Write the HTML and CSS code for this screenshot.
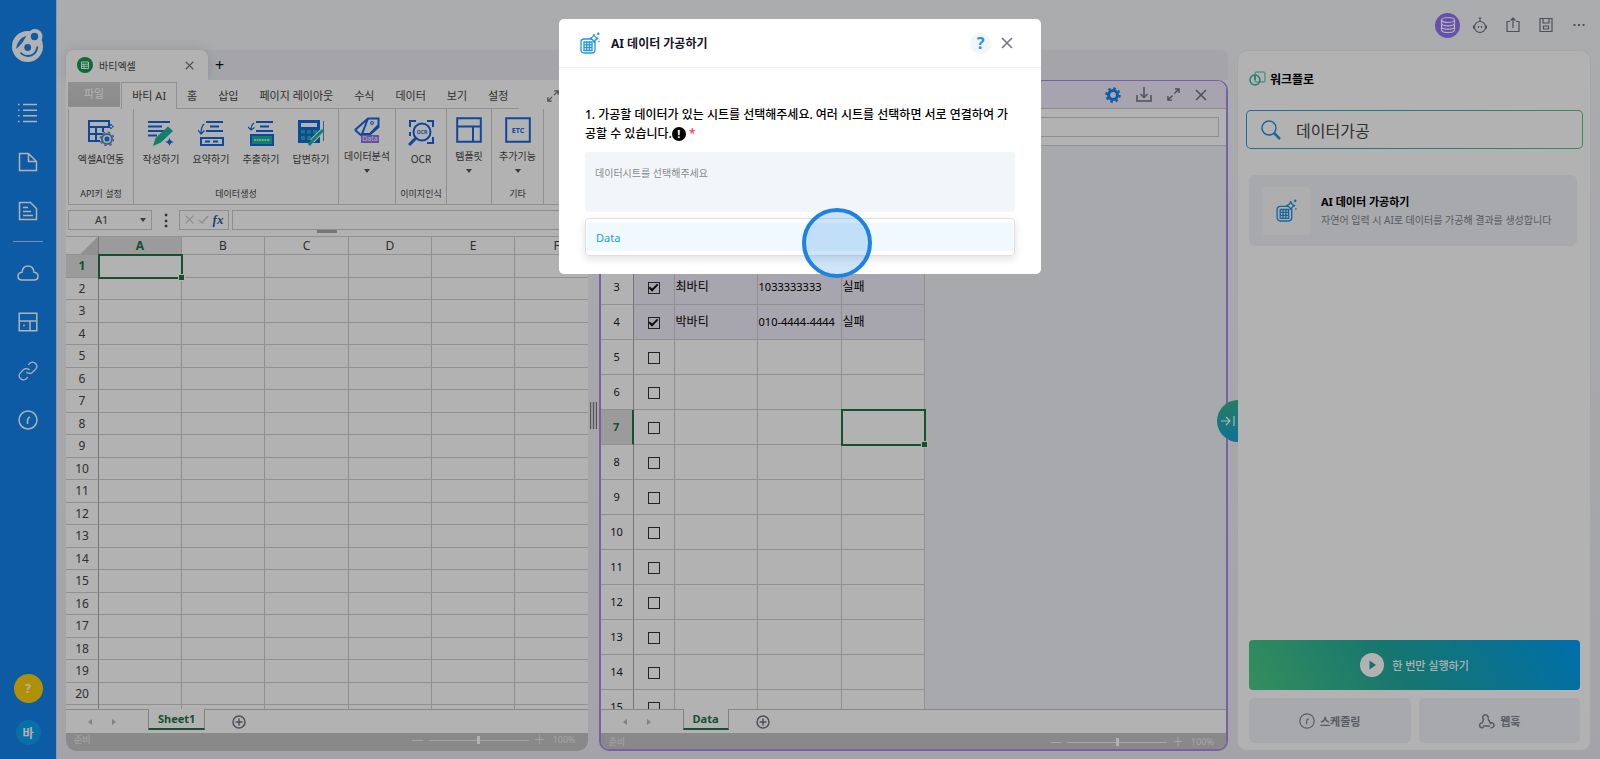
FILE: index.html
```html
<!DOCTYPE html>
<html lang="ko">
<head>
    <meta charset="UTF-8">
    <meta name="viewport" content="width=device-width, initial-scale=1.0">
    <title>바티엑셀</title>
    <link rel="stylesheet" href="styles.css">
</head>
<body>
    <!-- shared icons -->
    <svg class="defs" width="0" height="0">
        <symbol id="i-close" viewBox="0 0 12 12"><path d="M1 1l10 10M11 1L1 11"/></symbol>
        <symbol id="i-expand" viewBox="0 0 14 14"><path d="M8.500 1H13v4.500M13 1L8 6M5.500 13H1V8.500M1 13l5-5"/></symbol>
        <symbol id="i-clock" viewBox="0 0 20 20"><circle cx="10" cy="10" r="9"/><path d="M9.500 14v-3.500q0-2.500 2.500-3.500"/></symbol>
        <symbol id="i-plus" viewBox="0 0 14 14"><circle cx="7" cy="7" r="6"/><path d="M7 3.500v7M3.500 7h7"/></symbol>
        <symbol id="i-data" viewBox="0 0 20 22">
            <rect x="1" y="7" width="14" height="14" rx="3"/>
            <path d="M4 10h8v8.500H4zM6.700 10v8.500M9.400 10v8.500M4 12.800h8M4 15.700h8" stroke-width="1.300"/>
            <path d="M14 2q.7 3.700 4.200 4.300-3.500.7-4.200 4.200-.7-3.500-4.200-4.200Q13.300 5.700 14 2z" fill="#fff"/>
            <path d="M18.300.5v2.600M19.600 1.800H17M19 8.800v1.400"/>
        </symbol>
    </svg>

    <aside class="sidebar">
        <a href="#" class="logo" aria-label="logo">
            <svg width="32" height="34" viewBox="0 0 32 34">
                <circle cx="15.500" cy="18.500" r="15.500" fill="#fff"/>
                <circle cx="23" cy="8.500" r="7.500" fill="#fff"/>
                <circle cx="22.500" cy="8.500" r="3.700" fill="#1382ed"/>
                <circle cx="15.700" cy="19.500" r="3.400" fill="#1382ed"/>
                <path d="M8.500 24.500q3 3.500 7.500 3.500 8 0 9.500-9.500M5.500 18.500Q7 12 12.500 9.500 10 15 5.500 18.500z" fill="none" stroke="#1382ed" stroke-width="1.800"/>
            </svg>
        </a>
        <a href="#" aria-label="list"><svg width="20" height="20" viewBox="0 0 20 20"><path d="M5 1.500h14M5 7.200h14M5 12.800h14M5 18.500h14M0 1.500h1.500M0 7.200h1.500M0 12.800h1.500M0 18.500h1.500"/></svg></a>
        <a href="#" aria-label="file"><svg width="20" height="20" viewBox="0 0 20 20"><path d="M1.500 1.500h9l8 8v9h-17zM10.500 1.500v8h8"/></svg></a>
        <a href="#" aria-label="document"><svg width="20" height="20" viewBox="0 0 20 20"><path d="M1.500 1.500h11l6 6v11h-17zM5 6.500h5M5 10.500h8M5 14.500h10"/></svg></a>
        <hr>
        <a href="#" aria-label="cloud"><svg width="22" height="20" viewBox="0 0 22 20"><path d="M5 17q-4 0-4-3.800Q1 9.800 5 9.300 5.500 3 11 3t6 6.300q4 .5 4 3.900Q21 17 17 17z"/></svg></a>
        <a href="#" aria-label="layout"><svg width="20" height="20" viewBox="0 0 20 20"><path d="M1.200 1.200h17.600v17.600H1.200zM1.200 9h17.600M12 9v9.800M6 12.500v1.800"/></svg></a>
        <a href="#" aria-label="link"><svg width="20" height="20" viewBox="0 0 24 24"><path d="M10 13a5 5 0 0 0 7.500.5l4-4a5 5 0 0 0-7-7l-2.300 2.200M14 11a5 5 0 0 0-7.500-.5l-4 4a5 5 0 0 0 7 7l2.300-2.200"/></svg></a>
        <a href="#" aria-label="schedule"><svg width="20" height="20"><use href="#i-clock"/></svg></a>
        <button class="help">?</button>
        <button class="avatar">바</button>
    </aside>

    <div class="page">
        <header class="topbar">
            <button class="db" aria-label="database"><svg width="16" height="18" viewBox="0 0 16 18"><ellipse cx="8" cy="4" rx="6.500" ry="2.500"/><path d="M1.500 4v10q0 2.500 6.500 2.500t6.500-2.500V4M1.500 7.300q0 2.500 6.500 2.500t6.500-2.500M1.500 10.700q0 2.500 6.500 2.500t6.500-2.500"/></svg></button>
            <button aria-label="bot"><svg width="16" height="18" viewBox="0 0 16 18"><circle cx="8" cy="11" r="5.500"/><path d="M8 5.500V2M6.800 2h2.400M1.500 9.500v3M14.500 9.500v3M6.500 10v2M9.500 10v2"/></svg></button>
            <button aria-label="share"><svg width="16" height="18" viewBox="0 0 16 18"><path d="M5 5.500H2v10h12v-10h-3M8 12V2M5.500 4.500L8 2l2.500 2.500"/></svg></button>
            <button aria-label="save"><svg width="16" height="18" viewBox="0 0 16 18"><path d="M2 2.500h12v13H2zM5 2.500V7h6V2.500M5.500 10h5v3h-5z"/></svg></button>
            <button aria-label="more"><svg width="16" height="18" viewBox="0 0 16 18"><path d="M2.500 9h2M7 9h2M11.500 9h2" stroke-width="2"/></svg></button>
        </header>

        <div class="workspace">
            <section class="books">
                <div class="doc-tabs">
                    <div class="doc-tab">
                        <svg width="16" height="16" viewBox="0 0 16 16"><circle cx="8" cy="8" r="8" fill="#129a52"/><path d="M4.500 5h7v6.500h-7zM4.500 7.200h7M4.500 9.300h7M7 7v4.500" fill="none" stroke="#fff"/></svg>
                        <span>바티엑셀</span>
                        <button aria-label="close tab"><svg class="line" width="9" height="9"><use href="#i-close"/></svg></button>
                    </div>
                    <button class="new-tab">+</button>
                </div>

                <div class="panes">
                    <div class="pane left">
                        <nav class="menu">
                            <a href="#" class="file">파일</a>
                            <a href="#" class="active">바티 AI</a>
                            <a href="#">홈</a>
                            <a href="#">삽입</a>
                            <a href="#">페이지 레이아웃</a>
                            <a href="#">수식</a>
                            <a href="#">데이터</a>
                            <a href="#">보기</a>
                            <a href="#">설정</a>
                            <svg class="line" width="12" height="12"><use href="#i-expand"/></svg>
                        </nav>

                        <div class="ribbon">
                            <div class="group g-api">
                                <div class="tools">
                                    <button><svg viewBox="0 0 26 26"><path d="M1 1h20v6H1zM1 7v14h11M1 14h14M8 7v14M15 7v5"/><path d="M23 4q.3 2 2.500 2.500-2.200.5-2.500 2.500-.3-2-2.500-2.500Q22.700 6 23 4z" stroke-width="1"/><circle cx="19" cy="19" r="5" fill="#fff" stroke="#3aa0b8"/><circle cx="19" cy="19" r="6.500" stroke="#9a7ae0" stroke-dasharray="2.500 2.600"/><circle cx="19" cy="19" r="1.500"/></svg>엑셀AI연동</button>
                                </div>
                                <p>API키 설정</p>
                            </div>
                            <div class="group g-gen">
                                <div class="tools">
                                    <button><svg viewBox="0 0 26 26"><path d="M0 2h22M0 6.500h14M0 11h18M0 15.500h9"/><path d="M5 26l2.500-8L20 6.500l5 4.500-12 11.500z" fill="#1bb59a" stroke="none"/><path d="M21.500 17.500q.7 4 4.500 4.500-3.800.5-4.500 4-.7-3.500-4.500-4 3.800-.5 4.500-4.500z" fill="#1368e0" stroke="none"/></svg>작성하기</button>
                                    <button><svg viewBox="0 0 26 26"><path d="M8 2h17M12 6.500h9M8 11h17M3 18h22v7H3zM7 21.500h5M15 21.500h5"/><path d="M6 4q-3 3-3 10M0 10l3 4 3.500-3.500" stroke-width="1.200"/></svg>요약하기</button>
                                    <button><svg viewBox="0 0 26 26"><path d="M8 2h17M12 6.500h9M8 11h17"/><path d="M3 15h22v10H3z" fill="#1bb59a"/><path d="M6 20h16" stroke="#a9e8dc" stroke-dasharray="2 .6"/><path d="M6 3q-3 2-3 7M0 7l3 3 3.500-2.500" stroke-width="1.200"/></svg>추출하기</button>
                                    <button><svg viewBox="0 0 26 26"><path d="M1 1h20v21H1z" fill="#1368e0"/><path d="M3 3h16v4H3z" fill="#fff" stroke="none"/><path d="M3 10h4v3.500H3zM9 10h4v3.500H9zM15 10h4v3.500h-4zM3 16h4v4H3zM9 16h4v4H9z" fill="#1bb59a" stroke="none"/><path d="M24 11L14 21" stroke="#fff" stroke-width="5"/><path d="M25 10L14 21l-3 4" stroke="#1bb59a" stroke-width="3"/><path d="M25.500 1v20" stroke="#3aa0b8" stroke-width="1"/></svg>답변하기</button>
                                </div>
                                <p>데이터생성</p>
                            </div>
                            <div class="group g-analysis">
                                <div class="tools raised">
                                    <button><svg viewBox="0 0 26 26"><path d="M1 13L14 1.500h10.500V10L13 20M1 13l7 6M14 1.500L8 17h8l8.500-9"/><circle cx="18" cy="6" r="1.500" stroke-width="1"/><path d="M7 18h18v8H7z" fill="#9273f0" stroke="none"/><text x="16" y="24" font-size="7">Data</text></svg>데이터분석<i></i></button>
                                </div>
                            </div>
                            <div class="group g-ocr">
                                <div class="tools">
                                    <button><svg viewBox="0 0 26 26"><path d="M2 7V1h6M19 1h6v6M25 17v6h-6M2 12v4"/><circle cx="14" cy="12" r="8.500"/><path d="M8 18l-7 7" stroke-width="3"/><text class="blue" x="14" y="14" font-size="5">OCR</text></svg>OCR</button>
                                </div>
                                <p>이미지인식</p>
                            </div>
                            <div class="group g-template">
                                <div class="tools raised">
                                    <button><svg viewBox="0 0 26 26"><path d="M1.200 1.200h23.600v23.600H1.200zM1.200 9.500h23.600M17 9.500v15.300"/></svg>템플릿<i></i></button>
                                </div>
                            </div>
                            <div class="group g-etc">
                                <div class="tools raised">
                                    <button><svg viewBox="0 0 26 26"><path d="M1.200 1.200h23.600v23.600H1.200z"/><text class="blue" x="13" y="16" font-size="7">ETC</text></svg>추가기능<i></i></button>
                                </div>
                                <p>기타</p>
                            </div>
                        </div>

                        <div class="formula">
                            <button class="namebox">A1<i></i></button>
                            <span class="dots">⋮</span>
                            <div class="fx"><svg class="line" width="9" height="9"><use href="#i-close"/></svg><svg class="line" width="11" height="9" viewBox="0 0 11 9"><path d="M1 5l3 3 6-7"/></svg><em>fx</em></div>
                            <input type="text" aria-label="formula">
                            <div class="grip"></div>
                        </div>

                        <div class="grid">
                            <table class="sheet" id="sheet1"></table>
                        </div>
                        <div class="sheet-tabs">
                            <span class="arrows"><i></i><i></i></span>
                            <button class="sheet-tab">Sheet1</button>
                            <button class="add" aria-label="add sheet"><svg class="line" width="14" height="14"><use href="#i-plus"/></svg></button>
                        </div>
                        <div class="status">
                            <span>준비</span>
                            <div class="zoom"><b>—</b><input type="range" aria-label="zoom"><b>＋</b><span>100%</span></div>
                        </div>
                    </div>

                    <div class="splitter"></div>

                    <div class="pane right">
                        <div class="pane-head">
                            <svg width="16" height="16" viewBox="0 0 16 16"><circle cx="8" cy="8" r="4.500" fill="none" stroke="#1382ed" stroke-width="3"/><circle cx="8" cy="8" r="6.800" fill="none" stroke="#1382ed" stroke-width="2" stroke-dasharray="2.670"/></svg>
                            <svg class="line" width="16" height="16" viewBox="0 0 16 16"><path d="M1 8v6h14V8M8 0v10M4.500 7L8 10.500 11.500 7"/></svg>
                            <svg class="line" width="13" height="13"><use href="#i-expand"/></svg>
                            <svg class="line" width="12" height="12"><use href="#i-close"/></svg>
                        </div>
                        <div class="formula"><input type="text" aria-label="formula"></div>
                        <div class="grid">
                            <table class="sheet data" id="data"></table>
                        </div>
                        <div class="sheet-tabs">
                            <span class="arrows"><i></i><i></i></span>
                            <button class="sheet-tab">Data</button>
                            <button class="add" aria-label="add sheet"><svg class="line" width="14" height="14"><use href="#i-plus"/></svg></button>
                        </div>
                        <div class="status">
                            <span>준비</span>
                            <div class="zoom"><b>—</b><input type="range" aria-label="zoom"><b>＋</b><span>100%</span></div>
                        </div>
                    </div>
                </div>
            </section>

            <section class="workflow">
                <button class="collapse" aria-label="collapse"><svg width="14" height="12" viewBox="0 0 14 12"><path d="M0 6h9M5 2l4 4-4 4M13 1v10"/></svg></button>
                <h2><svg width="17" height="16" viewBox="0 0 17 16"><rect x="6" y="1" width="10" height="10" rx="2" stroke="#7adbb5"/><circle cx="6" cy="9" r="5" stroke="#35b5a5"/><path d="M6 4v5" stroke="#35b5a5"/></svg>워크플로</h2>
                <label class="search">
                    <svg width="20" height="20" viewBox="0 0 20 20"><circle cx="8" cy="8" r="7"/><path d="M13 13l6 6" stroke-width="2.500"/></svg>
                    <input type="text" value="데이터가공" aria-label="search">
                </label>
                <a href="#" class="card">
                    <span class="card-icon"><svg width="21" height="23"><use href="#i-data"/></svg></span>
                    <span class="card-text"><strong>AI 데이터 가공하기</strong><small>자연어 입력 시 AI로 데이터를 가공해 결과를 생성합니다</small></span>
                </a>
                <button class="run"><svg width="24" height="24" viewBox="0 0 24 24"><circle cx="12" cy="12" r="12" fill="#fff"/><path d="M9.500 7.500l6.500 4.500-6.500 4.500z" fill="#22a596"/></svg>한 번만 실행하기</button>
                <div class="actions">
                    <button><svg width="16" height="16"><use href="#i-clock"/></svg>스케줄링</button>
                    <button><svg width="17" height="16" viewBox="0 0 17 16"><path d="M6 5.500L4 10.500M10 6l3 5M5 13h7M5.500 6.500a2.700 2.700 0 1 1 4.500-1M3.500 10a2.400 2.400 0 1 0 2 4.200M12 10.500a2.400 2.400 0 1 1 .5 4"/></svg>웹훅</button>
                </div>
            </section>
        </div>
    </div>

    <div class="overlay">
        <div class="modal">
            <div class="modal-head">
                <svg class="blue-line" width="20" height="22"><use href="#i-data"/></svg>
                <h3>AI 데이터 가공하기</h3>
                <button class="q">?</button>
                <button aria-label="close"><svg class="line" width="12" height="12"><use href="#i-close"/></svg></button>
            </div>
            <div class="modal-body">
                <label for="sheets">1. 가공할 데이터가 있는 시트를 선택해주세요. 여러 시트를 선택하면 서로 연결하여 가공할 수 있습니다.<span class="info">!</span> <span class="required">*</span></label>
                <textarea id="sheets" placeholder="데이터시트를 선택해주세요"></textarea>
                <div class="options"><button>Data</button></div>
            </div>
            <div class="pointer"></div>
        </div>
    </div>

    <script>
        let cols = ["A", "B", "C", "D", "E", "F"];
        let html = "<colgroup><col>" + "<col>".repeat(6) + "</colgroup><tr><th class='corner'></th>";
        cols.forEach(c => html += `<th class="${c === "A" ? "on" : ""}">${c}</th>`);
        html += "</tr>";
        for (let r = 1; r <= 20; r++) {
            html += `<tr><th class="${r === 1 ? "on" : ""}">${r}</th>`;
            cols.forEach(c => html += r === 1 && c === "A" ? "<td class='selected'></td>" : "<td></td>");
            html += "</tr>";
        }
        html += "<tr>" + "<th></th>" + "<td></td>".repeat(6) + "</tr>";
        document.getElementById("sheet1").innerHTML = html;

        let people = {
            3: ["최바티", "1033333333", "실패"],
            4: ["박바티", "010-4444-4444", "실패"]
        };
        html = "<colgroup>" + "<col>".repeat(5) + "</colgroup><tr><th></th><th></th><th></th><th></th><th></th></tr>";
        for (let r = 1; r <= 15; r++) {
            let row = people[r] || ["", "", ""];
            html += `<tr class="${r < 5 ? "checked" : ""}"><th class="${r === 7 ? "on" : ""}">${r}</th>`;
            html += `<td><input type="checkbox" aria-label="row ${r}" ${r < 5 ? "checked" : ""}></td>`;
            row.forEach((v, i) => html += `<td class="${r === 7 && i === 2 ? "selected" : ""}">${v}</td>`);
            html += "</tr>";
        }
        document.getElementById("data").innerHTML = html;
    </script>
</body>
</html>
```

FILE: styles.css
```css
:root {
    --blue: #1382ed;
    --tool: #1368e0;
    --green: #217346;
    --line: #cfcfcf;
    --muted: #80838f;
    --soft: #f1f2f6;
    --purple: #a98af0;
}
* {
    box-sizing: border-box;
}
body {
    display: flex;
    height: 100vh;
    margin: 0;
    overflow: hidden;
    background: linear-gradient(#f4f6f8, #ebebf1);
    font-family: "Noto Sans", "Noto Sans CJK KR", sans-serif;
    font-size: 11px;
    color: #444;
}
button, input, textarea {
    font: inherit;
    color: inherit;
}
button {
    padding: 0;
    border: none;
    background: none;
    cursor: pointer;
}
a {
    color: inherit;
    text-decoration: none;
}
svg {
    display: block;
    flex: none;
}
.defs {
    position: absolute;
}
.line {
    fill: none;
    stroke: #70727f;
    stroke-width: 1.5;
}

/* sidebar */
.sidebar {
    display: flex;
    flex-direction: column;
    align-items: center;
    gap: 29px;
    width: 57px;
    padding: 28px 0 14px;
    background: var(--blue);
    border-right: 1px solid #c4d8f0;
}
.sidebar svg {
    fill: none;
    stroke: #fff;
    stroke-width: 1.5;
}
.sidebar .logo {
    margin-bottom: 12px;
}
.sidebar .logo svg {
    stroke: none;
}
.sidebar hr {
    width: 30px;
    margin: -9px 0 -8px;
    border: none;
    border-top: 1px solid #a8cdf5;
}
.help, .avatar {
    border-radius: 50%;
    color: #fff;
    font-size: 12px;
    font-weight: bold;
}
.help {
    width: 29px;
    height: 29px;
    margin-top: auto;
    background: #ffcf0a;
}
.avatar {
    width: 25px;
    height: 25px;
    margin-top: -12px;
    background: #0ea0f0;
}

/* top bar */
.page {
    flex: 1;
    display: flex;
    flex-direction: column;
    min-width: 0;
}
.topbar {
    display: flex;
    justify-content: flex-end;
    align-items: center;
    gap: 17px;
    height: 50px;
    padding-right: 13px;
}
.topbar svg {
    fill: none;
    stroke: #70727f;
    stroke-width: 1.2;
}
.topbar .db {
    display: flex;
    justify-content: center;
    align-items: center;
    width: 25px;
    height: 25px;
    margin-right: -5px;
    border-radius: 50%;
    background: #9175f5;
}
.topbar .db svg {
    stroke: #fff;
}
.workspace {
    flex: 1;
    display: flex;
    gap: 9px;
    min-height: 0;
    padding: 0 9px 8px;
}

/* document tabs */
.books {
    flex: 1;
    display: flex;
    flex-direction: column;
    min-width: 0;
}
.doc-tabs {
    display: flex;
    height: 30px;
    background: #ecedf3;
    border-radius: 8px 8px 0 0;
}
.doc-tab {
    display: flex;
    align-items: center;
    gap: 6px;
    width: 142px;
    padding: 0 14px 0 11px;
    background: #fff;
    border-radius: 8px 8px 0 0;
    box-shadow: 0 0 12px rgba(0, 0, 0, 0.12);
    font-size: 10px;
}
.doc-tab button {
    margin-left: auto;
}
.new-tab {
    width: 23px;
    color: #111;
    font-size: 16px;
}

/* panes */
.panes {
    flex: 1;
    display: flex;
    min-height: 0;
}
.pane {
    display: flex;
    flex-direction: column;
    min-width: 0;
    overflow: hidden;
    background: #fff;
}
.left {
    flex: 1 1 522px;
    border-radius: 0 0 10px 10px;
}
.right {
    flex: 1 1 630px;
    border: 2px solid var(--purple);
    border-top-width: 1px;
    border-radius: 10px;
}
.splitter {
    align-self: center;
    width: 7px;
    height: 27px;
    margin: 0 2px;
    background: repeating-linear-gradient(90deg, #777 0 1px, #ddd 1px 3px);
}
.menu {
    display: flex;
    align-items: stretch;
    height: 29px;
    padding: 2px 0 0 2px;
}
.menu a {
    padding: 2px 11px 0 10px;
    border-bottom: 1px solid var(--line);
    line-height: 23px;
    white-space: nowrap;
}
.menu .file {
    height: 25px;
    margin-right: 1px;
    padding: 0 16px;
    background: linear-gradient(#d0d0d0, #c6c6c6);
    color: #fff;
}
.menu .active {
    border: 1px solid var(--line);
    border-bottom: none;
    padding: 1px 10px 0;
}
.menu svg {
    margin: 8px 29px 0 auto;
}
.ribbon {
    display: flex;
    height: 96px;
    margin-left: 2px;
    border: solid var(--line);
    border-width: 0 0 1px 1px;
}
.group {
    position: relative;
    padding-top: 11px;
    border-right: 1px solid var(--line);
}
.g-api { width: 65px; }
.g-gen { width: 205px; }
.g-analysis { width: 57px; }
.g-ocr { width: 51px; }
.g-template { width: 45px; }
.g-etc { width: 52px; }
.tools {
    display: flex;
    justify-content: center;
}
.tools button {
    display: flex;
    flex-direction: column;
    align-items: center;
    gap: 5px;
    width: 50px;
    font-size: 10px;
    line-height: 16px;
    white-space: nowrap;
}
.tools svg {
    width: 26px;
    height: 26px;
    fill: none;
    stroke: var(--tool);
    stroke-width: 2;
}
.tools text {
    fill: #fff;
    stroke: none;
    text-anchor: middle;
}
.tools .blue {
    fill: var(--tool);
    font-weight: bold;
}
.raised {
    margin-top: -3px;
}
.tools i, .namebox i {
    border: solid transparent;
    border-width: 4px 3px 0;
    border-top-color: #555;
}
.group p {
    position: absolute;
    left: 0;
    right: 0;
    bottom: 2px;
    margin: 0;
    font-size: 9px;
    line-height: 16px;
    text-align: center;
}
.formula {
    position: relative;
    display: flex;
    align-items: center;
    height: 32px;
    padding: 0 0 2px 2px;
    border-bottom: 1px solid var(--line);
}
.formula input {
    flex: 1;
    min-width: 0;
    height: 20px;
    border: 1px solid #ccc;
    background: none;
}
.grip {
    position: absolute;
    left: calc(50% - 10px);
    bottom: 3px;
    width: 20px;
    height: 3px;
    background: #aaa;
}
.namebox {
    display: flex;
    align-items: center;
    width: 84px;
    height: 20px;
    padding: 0 5px 0 26px;
    border: 1px solid #ccc;
}
.namebox i {
    margin-left: auto;
}
.dots {
    width: 27px;
    text-align: center;
    font-size: 16px;
    font-weight: bold;
}
.fx {
    display: flex;
    align-items: center;
    justify-content: center;
    gap: 4px;
    width: 50px;
    height: 20px;
    margin-right: 3px;
    border: 1px solid #ccc;
}
.fx svg {
    stroke: #ccc;
}
.fx em {
    color: #2a5fa5;
    font-family: "Liberation Serif", serif;
    font-size: 13px;
    font-weight: bold;
}
.right .pane-head {
    display: flex;
    justify-content: flex-end;
    align-items: center;
    gap: 15px;
    height: 28px;
    padding-right: 19px;
    background: #efebfb;
    border-bottom: 1px solid #ccc;
}
.right .formula {
    height: 37px;
    padding: 0 7px;
}

/* grids */
.grid {
    flex: 1;
    min-height: 0;
    overflow: hidden;
    background: var(--soft);
}
.sheet {
    width: 533px;
    table-layout: fixed;
    border-collapse: separate;
    border-spacing: 0;
    background: #fff;
    font-size: 12px;
}
.sheet col {
    width: 83px;
}
.sheet col:nth-child(3n + 1) {
    width: 84px;
}
.sheet col:first-child {
    width: 33px;
}
.sheet tr {
    height: 22px;
}
.sheet tr:nth-child(even) {
    height: 23px;
}
.sheet tr:first-child {
    height: 18px;
}
.sheet th, .sheet td {
    padding: 0;
    border: solid var(--line);
    border-width: 0 1px 1px 0;
    font-weight: normal;
    line-height: 16px;
}
.sheet th:first-child {
    border-right-color: #aaa;
}
.sheet .on {
    background: #dedede;
    color: var(--green);
    font-weight: bold;
}
.sheet .corner {
    background: linear-gradient(135deg, #fff 65%, #d0d0d0 65%);
}
.sheet .selected {
    position: relative;
    outline: 2px solid var(--green);
    outline-offset: -1px;
}
.sheet .selected::after {
    content: "";
    position: absolute;
    right: -3px;
    bottom: -3px;
    width: 5px;
    height: 5px;
    background: var(--green);
    outline: 1px solid #fff;
}
.sheet.data {
    width: 324px;
    color: #222;
}
.data col:nth-child(2) {
    width: 41px;
}
.data tr, .data tr:nth-child(even) {
    height: 35px;
}
.data tr:first-child {
    height: 54px;
}
.data th {
    font-size: 11px;
}
.data td {
    padding: 0 1px;
    color: #000;
    white-space: nowrap;
}
.data td:nth-child(4) {
    font-size: 11px;
}
.data .checked td {
    background: #f0edf9;
}
.data input {
    display: grid;
    place-content: center;
    appearance: none;
    width: 12px;
    height: 12px;
    margin: 2px auto 0;
    border: 1px solid #333;
}
.data input:checked::after {
    content: "";
    width: 7px;
    height: 3px;
    margin-bottom: 3px;
    border: solid #111;
    border-width: 0 0 2px 2px;
    rotate: -45deg;
}
.sheet.data .on {
    border-right: 2px solid var(--green);
}
.sheet-tabs {
    display: flex;
    height: 24px;
    border-top: 1px solid #c4c4c4;
}
.arrows {
    display: flex;
    align-items: center;
    gap: 20px;
    width: 82px;
    padding-left: 22px;
}
.arrows i {
    border: solid transparent;
    border-width: 3px 4px 3px 0;
    border-right-color: #bbb;
}
.arrows i + i {
    border-width: 3px 0 3px 4px;
    border-left-color: #bbb;
}
.sheet-tab {
    height: 21px;
    margin-top: -1px;
    padding: 0 9px;
    background: #fff;
    border: solid #bbb;
    border-width: 0 1px;
    border-bottom: 2px solid var(--green);
    color: var(--green);
    font-weight: bold;
}
.add {
    margin-left: 27px;
}
.status {
    display: flex;
    justify-content: space-between;
    height: 18px;
    padding: 0 12px 0 8px;
    background: #c4c4c4;
    color: #eee;
    font-size: 9px;
    line-height: 14px;
}
.right .status {
    height: 16px;
    padding-top: 2px;
}
.zoom {
    display: flex;
    align-items: center;
    gap: 5px;
    height: 14px;
}
.zoom b {
    font-weight: normal;
    font-size: 12px;
}
.zoom span {
    margin-left: 2px;
}
.zoom input {
    appearance: none;
    width: 100px;
    height: 1px;
    margin: 0;
    background: #eee;
}
.zoom input::-webkit-slider-thumb {
    appearance: none;
    width: 3px;
    height: 8px;
    background: #fff;
}

/* workflow panel */
.workflow {
    position: relative;
    display: flex;
    flex-direction: column;
    width: 354px;
    padding: 20px 10px 7px 11px;
    background: #fff;
    border: 1px solid #eceef2;
    border-radius: 10px;
}
.collapse {
    position: absolute;
    top: 349px;
    left: -21px;
    width: 21px;
    height: 42px;
    padding-left: 4px;
    border-radius: 21px 0 0 21px;
    background: linear-gradient(#35b58a, #1aa0d8);
}
.collapse svg {
    fill: none;
    stroke: #fff;
    stroke-width: 1.2;
}
.workflow h2 {
    display: flex;
    align-items: center;
    gap: 4px;
    height: 16px;
    margin: 0 0 23px;
    color: #000;
    font-size: 12px;
}
.workflow h2 svg {
    fill: none;
    stroke-width: 1.5;
}
.search {
    display: flex;
    align-items: center;
    gap: 15px;
    height: 39px;
    margin: 0 -3px 26px;
    padding: 0 14px;
    border: 1px solid transparent;
    border-radius: 5px;
    background: linear-gradient(#fff, #fff) padding-box, linear-gradient(90deg, #2f98e8, #55c585) border-box;
}
.search svg {
    fill: none;
    stroke: #2196e3;
    stroke-width: 1.5;
}
.search input {
    flex: 1;
    min-width: 0;
    padding: 0;
    border: none;
    outline: none;
    font-size: 16px;
}
.card {
    display: flex;
    align-items: center;
    gap: 11px;
    height: 71px;
    margin-right: 3px;
    padding: 0 18px 0 13px;
    border-radius: 6px;
    background: var(--soft);
}
.card-icon {
    display: flex;
    justify-content: center;
    align-items: center;
    width: 48px;
    height: 48px;
    background: #fafafa;
    border-radius: 4px;
}
.card-icon svg, .blue-line {
    fill: none;
    stroke: #2196e3;
    stroke-width: 1.3;
}
.card-text {
    flex: 1;
    min-width: 0;
    line-height: 19px;
}
.card-text strong, .card-text small {
    display: block;
    overflow: hidden;
    white-space: nowrap;
}
.card-text strong {
    color: #000;
}
.card-text small {
    color: var(--muted);
    font-size: 10px;
}
.run {
    display: flex;
    justify-content: center;
    align-items: center;
    gap: 8px;
    height: 50px;
    margin: auto 0 8px;
    border-radius: 4px;
    background: linear-gradient(60deg, #4ccc85, #20a9a0 45%, #009ff5);
    color: #fff;
    font-weight: 500;
}
.actions {
    display: flex;
    gap: 8px;
}
.actions button {
    flex: 1;
    display: flex;
    justify-content: center;
    align-items: center;
    gap: 5px;
    height: 45px;
    border-radius: 5px;
    background: var(--soft);
    color: var(--muted);
    font-weight: bold;
}
.actions svg {
    fill: none;
    stroke: var(--muted);
    stroke-width: 1.5;
}

/* modal */
.overlay {
    position: fixed;
    inset: 0;
    background: rgba(0, 0, 0, 0.3);
}
.modal {
    position: relative;
    width: 482px;
    margin: 19px auto;
    padding-bottom: 18px;
    background: #fff;
    border-radius: 5px;
}
.modal-head {
    display: flex;
    align-items: center;
    height: 49px;
    padding: 0 28px 0 21px;
    border-bottom: 1px solid #eee;
}
.modal-head h3 {
    margin: 0 auto 0 11px;
    color: #15152a;
    font-size: 12px;
}
.q {
    width: 21px;
    height: 21px;
    margin-right: 10px;
    border-radius: 50%;
    background: #f0f6fb;
    color: #1a94e6;
    font-size: 16px;
    font-weight: bold;
    line-height: 21px;
}
.modal-body {
    padding: 37px 26px 0;
}
.modal-body label {
    display: block;
    margin-bottom: 9px;
    color: #000;
    font-size: 12px;
    font-weight: 500;
    line-height: 19px;
    word-break: break-all;
}
.info {
    display: inline-block;
    width: 14px;
    height: 14px;
    border-radius: 50%;
    background: #000;
    color: #fff;
    font-size: 11px;
    font-weight: bold;
    line-height: 14px;
    text-align: center;
}
.required {
    color: #f0386b;
}
.modal-body textarea {
    display: block;
    width: 100%;
    height: 60px;
    padding: 13px 10px;
    border: none;
    border-radius: 4px;
    background: #f3f6f9;
    font-size: 10px;
    resize: none;
}
.modal-body textarea::placeholder {
    color: #888;
}
.options {
    margin-top: 6px;
    padding: 4px 1px;
    border: 1px solid #dcdfe4;
    border-radius: 4px;
    box-shadow: 0 3px 8px rgba(0, 0, 0, 0.12);
}
.options button {
    display: block;
    width: 100%;
    height: 28px;
    padding-left: 9px;
    background: #f0f9ff;
    color: #1f9cdf;
    text-align: left;
}
.pointer {
    position: absolute;
    top: 189px;
    left: 243px;
    width: 70px;
    height: 70px;
    border: 4px solid #1d82e2;
    border-radius: 50%;
    background: rgba(29, 130, 226, 0.22);
}
```
